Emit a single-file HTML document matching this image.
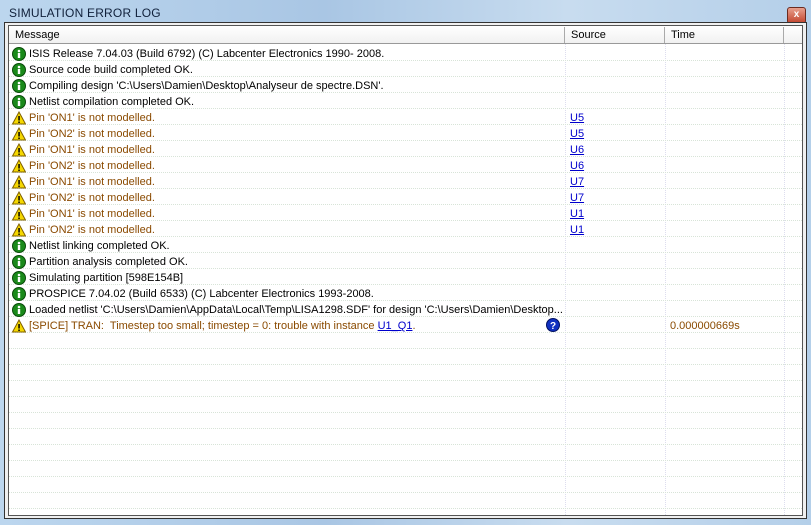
<!DOCTYPE html>
<html><head><style>
*{margin:0;padding:0;box-sizing:border-box}
body{width:811px;height:525px;overflow:hidden;background:linear-gradient(90deg,#bcd6ee,#a9c6e4 40%,#c8dcef 70%,#b4cfe9);font-family:"Liberation Sans",sans-serif;font-size:11px;position:relative}
.title{position:absolute;left:9px;top:6px;font-size:12px;color:#10203a;letter-spacing:0.2px}
.close{position:absolute;left:787px;top:7px;width:19px;height:17px;background:linear-gradient(#e8a08e,#c2452d);border:1px solid #6b2b20;border-radius:3px;color:#fff;font-size:10px;font-weight:bold;text-align:center;line-height:14px}
.outer{position:absolute;left:4px;top:22px;width:803px;height:497px;border:1px solid #333;background:#f0f0f0}
.inner{position:absolute;left:8px;top:25px;width:795px;height:491px;border:1px solid #555;background:#fff;overflow:hidden}
.hdr{position:absolute;left:0;top:0;width:795px;height:18px;background:linear-gradient(#fff,#f1f1f1);border-bottom:1px solid #999}
.hdr div{position:absolute;top:1px;height:16px;line-height:16px;padding-left:6px;border-right:1px solid #aaa;color:#000}
.row{position:absolute;left:0;width:795px;height:16px;border-bottom:1px dotted #d8e4d8}
.row span{position:absolute;top:2px;line-height:14px;white-space:nowrap}
.m{left:20px}
.ok{color:#000}.w{color:#8a4a00}
.src{left:561px;color:#00c;text-decoration:underline}
.vl{position:absolute;top:18px;bottom:0;border-left:1px dotted #dde;}
.ic{position:absolute;left:3px;top:2px;width:14px;height:14px}
</style></head><body>
<div class="title">SIMULATION ERROR LOG</div>
<div class="close">x</div>
<div class="outer"></div>
<div class="inner">
<div class="hdr"><div style="left:0;width:556px">Message</div><div style="left:556px;width:100px">Source</div><div style="left:656px;width:119px">Time</div></div>
<div class="vl" style="left:556px"></div><div class="vl" style="left:656px"></div><div class="vl" style="left:775px"></div>
<div id="rows"></div>
</div>
<script>
var I='<svg class="ic" viewBox="0 0 14 14"><circle cx="7" cy="7" r="6.5" fill="#1a8a1a" stroke="#0a4a0a"/><circle cx="7" cy="4" r="1.3" fill="#fff"/><rect x="5.8" y="6" width="2.4" height="5" fill="#fff"/></svg>';
var W='<svg class="ic" viewBox="0 0 14 14"><path d="M7 1L13.5 13H0.5Z" fill="#f5d800" stroke="#806000"/><rect x="6.3" y="5" width="1.5" height="4.5" fill="#000"/><rect x="6.3" y="10.5" width="1.5" height="1.5" fill="#000"/></svg>';
var rows=[[0,"ISIS Release 7.04.03 (Build 6792) (C) Labcenter Electronics 1990- 2008."],[0,"Source code build completed OK."],[0,"Compiling design 'C:\\Users\\Damien\\Desktop\\Analyseur de spectre.DSN'."],[0,"Netlist compilation completed OK."],
[1,"Pin 'ON1' is not modelled.","U5"],[1,"Pin 'ON2' is not modelled.","U5"],[1,"Pin 'ON1' is not modelled.","U6"],[1,"Pin 'ON2' is not modelled.","U6"],[1,"Pin 'ON1' is not modelled.","U7"],[1,"Pin 'ON2' is not modelled.","U7"],[1,"Pin 'ON1' is not modelled.","U1"],[1,"Pin 'ON2' is not modelled.","U1"],
[0,"Netlist linking completed OK."],[0,"Partition analysis completed OK."],[0,"Simulating partition [598E154B]"],[0,"PROSPICE 7.04.02 (Build 6533) (C) Labcenter Electronics 1993-2008."],[0,"Loaded netlist 'C:\\Users\\Damien\\AppData\\Local\\Temp\\LISA1298.SDF' for design 'C:\\Users\\Damien\\Desktop..."]];
var h='';
for(var i=0;i<29;i++){var t=19+16*i;h+='<div class="row" style="top:'+t+'px">';
if(i<rows.length){var r=rows[i];h+=(r[0]?W:I)+'<span class="m '+(r[0]?'w':'ok')+'">'+r[1]+'</span>';if(r[2])h+='<span class="src">'+r[2]+'</span>';}
if(i==17){h+=W+'<span class="m w">[SPICE] TRAN:&nbsp; Timestep too small; timestep = 0: trouble with instance <u style="color:#00c">U1_Q1</u>.</span><svg style="position:absolute;left:537px;top:1px" width="14" height="14" viewBox="0 0 14 14"><circle cx="7" cy="7" r="6.5" fill="#1030c0" stroke="#001060"/><text x="7" y="11" font-size="10" font-weight="bold" fill="#fff" text-anchor="middle" font-family="Liberation Sans">?</text></svg><span class="w" style="left:661px">0.000000669s</span>';}
h+='</div>';}
document.getElementById('rows').innerHTML=h;
</script>
</body></html>
